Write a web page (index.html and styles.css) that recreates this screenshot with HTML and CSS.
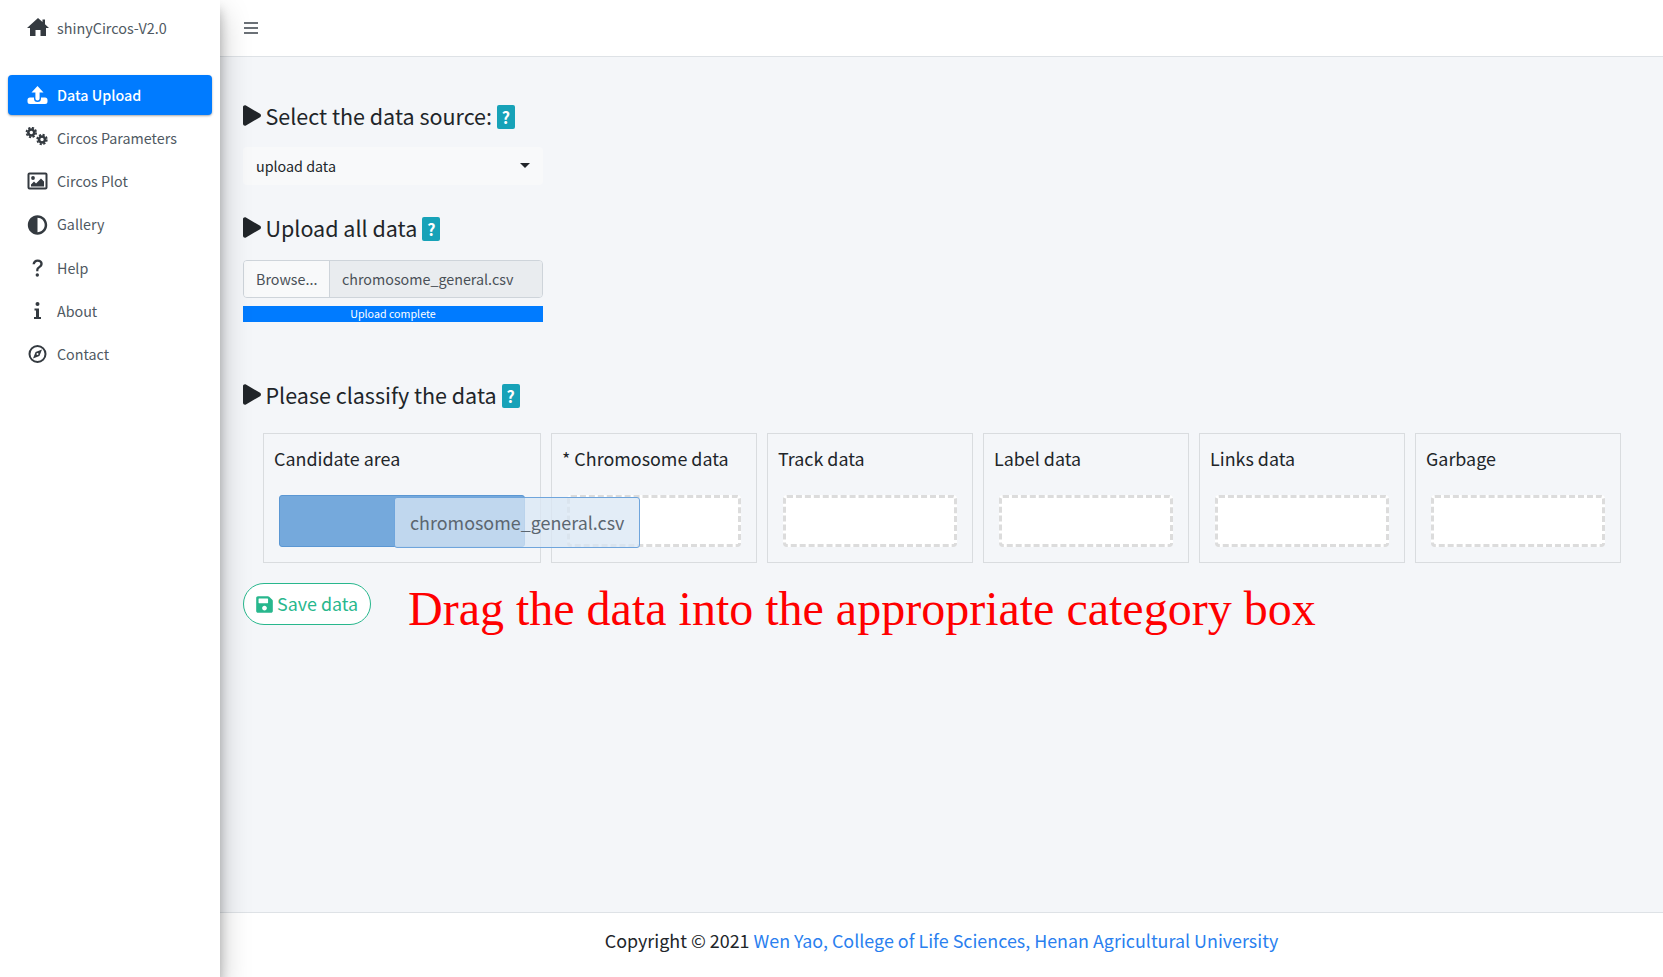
FILE: index.html
```html
<!DOCTYPE html>
<html lang="en">
<head>
    <meta charset="UTF-8">
    <meta name="viewport" content="width=device-width, initial-scale=1.0">
    <title>shinyCircos-V2.0</title>
    <link rel="stylesheet" href="styles.css">
</head>
<body>
    <aside class="sidebar">
        <div class="brand">
            <svg class="nav-icon brand-icon" viewBox="0 0 22 20"><path d="M11 1l4.500 4V2.500H18v4.700L22 11h-3v8h-5.500v-6h-5v6H3v-8H0z"/></svg>
            <span>shinyCircos-V2.0</span>
        </div>
        <nav class="nav">
            <a class="nav-item active">
                <svg class="nav-icon" viewBox="0 0 20 20"><path d="M10 1l6 6.500h-3.900v6a2.100 2.100 0 0 1-4.200 0v-6H4z"/><path d="M6.500 12.500v1a3.500 3.500 0 0 0 7 0v-1h4a2.500 2.500 0 0 1 2.500 2.500v1.500a2.500 2.500 0 0 1-2.500 2.500h-15A2.500 2.500 0 0 1 0 16.500V15a2.500 2.500 0 0 1 2.500-2.500z"/></svg>
                <span>Data Upload</span>
            </a>
            <a class="nav-item">
                <svg class="nav-icon cogs" viewBox="0 0 22 20">
                    <circle cx="5.800" cy="5.500" r="4.800" class="gear-teeth"/>
                    <circle cx="5.800" cy="5.500" r="3" class="gear-ring"/>
                    <circle cx="16.500" cy="12.500" r="4.800" class="gear-teeth"/>
                    <circle cx="16.500" cy="12.500" r="3" class="gear-ring"/>
                </svg>
                <span>Circos Parameters</span>
            </a>
            <a class="nav-item">
                <svg class="nav-icon" viewBox="0 0 20 20"><path fill-rule="evenodd" d="M2 1.500h16a2 2 0 0 1 2 2v13a2 2 0 0 1-2 2H2a2 2 0 0 1-2-2v-13a2 2 0 0 1 2-2zM2 3.500v13h16v-13z"/><circle cx="5.500" cy="7" r="1.900"/><path d="M3.500 15.500v-2l3-3 2 2 5-5 3 3v5z"/></svg>
                <span>Circos Plot</span>
            </a>
            <a class="nav-item">
                <svg class="nav-icon" viewBox="0 0 512 512"><path d="M8 256c0 136.966 111.033 248 248 248s248-111.034 248-248S392.966 8 256 8 8 119.033 8 256zm248 184V72c101.705 0 184 82.311 184 184 0 101.705-82.311 184-184 184z"/></svg>
                <span>Gallery</span>
            </a>
            <a class="nav-item">
                <svg class="nav-icon" viewBox="0 0 20 20"><path d="M5 6.200C5.300 3.300 7.300 1.500 10.200 1.500c3 0 5 1.800 5 4.300 0 2-1.100 3-2.500 4-1.300.9-1.800 1.500-1.800 2.700v.7H8.700v-1c0-1.800.8-2.800 2.200-3.800 1.200-.9 1.900-1.500 1.900-2.600 0-1.200-1-2-2.600-2-1.500 0-2.500.9-2.800 2.400z"/><circle cx="9.800" cy="17" r="1.700"/></svg>
                <span>Help</span>
            </a>
            <a class="nav-item">
                <svg class="nav-icon" viewBox="0 0 20 20"><circle cx="10" cy="3" r="2"/><path d="M7 7.500h4.500V16H13.500v2h-7v-2h2V9.500H7z"/></svg>
                <span>About</span>
            </a>
            <a class="nav-item">
                <svg class="nav-icon" viewBox="0 0 20 20"><path fill-rule="evenodd" d="M10 1a9 9 0 1 1 0 18a9 9 0 0 1 0-18zM10 3a7 7 0 1 0 0 14a7 7 0 0 0 0-14z"/><path fill-rule="evenodd" d="M14.500 5.500l-2.600 6.400-6.400 2.600 2.600-6.400zM10 9a1 1 0 1 0 0 2a1 1 0 0 0 0-2z"/></svg>
                <span>Contact</span>
            </a>
        </nav>
    </aside>

    <div class="wrapper">
        <header class="navbar">
            <svg class="bars" viewBox="0 0 14 12"><path d="M0 1h14M0 6h14M0 11h14"/></svg>
        </header>

        <main class="content">
            <h4 class="title first">
                <svg class="play" viewBox="0 0 448 512"><path d="M424.400 214.700L72.400 6.600C43.800-10.300 0 6.100 0 47.900V464c0 37.500 40.700 60.100 72.400 41.300l352-208c31.400-18.500 31.500-64.100 0-82.600z"/></svg>
                <span>Select the data source:</span>
                <span class="help-badge">?</span>
            </h4>
            <div class="select">
                <span class="select-text">upload data</span>
                <span class="caret"></span>
            </div>

            <h4 class="title upload-title">
                <svg class="play" viewBox="0 0 448 512"><path d="M424.400 214.700L72.400 6.600C43.800-10.300 0 6.100 0 47.900V464c0 37.500 40.700 60.100 72.400 41.300l352-208c31.400-18.500 31.500-64.100 0-82.600z"/></svg>
                <span>Upload all data</span>
                <span class="help-badge">?</span>
            </h4>
            <div class="file-input">
                <span class="browse">Browse...</span>
                <span class="file-name">chromosome_general.csv</span>
            </div>
            <div class="progress">Upload complete</div>

            <h4 class="title classify-title">
                <svg class="play" viewBox="0 0 448 512"><path d="M424.400 214.700L72.400 6.600C43.800-10.300 0 6.100 0 47.900V464c0 37.500 40.700 60.100 72.400 41.300l352-208c31.400-18.500 31.500-64.100 0-82.600z"/></svg>
                <span>Please classify the data</span>
                <span class="help-badge">?</span>
            </h4>

            <div class="buckets">
                <div class="bucket candidate">
                    <div class="bucket-title">Candidate area</div>
                    <div class="rank-item"></div>
                    <div class="drag-ghost">chromosome_general.csv</div>
                </div>
                <div class="bucket">
                    <div class="bucket-title">* Chromosome data</div>
                    <div class="drop-zone"></div>
                </div>
                <div class="bucket">
                    <div class="bucket-title">Track data</div>
                    <div class="drop-zone"></div>
                </div>
                <div class="bucket">
                    <div class="bucket-title">Label data</div>
                    <div class="drop-zone"></div>
                </div>
                <div class="bucket">
                    <div class="bucket-title">Links data</div>
                    <div class="drop-zone"></div>
                </div>
                <div class="bucket">
                    <div class="bucket-title">Garbage</div>
                    <div class="drop-zone"></div>
                </div>
            </div>

            <div class="save-row">
                <button class="save-btn" type="button">
                    <svg class="save-icon" viewBox="0 0 448 512"><path d="M433.941 129.941l-83.882-83.882A48 48 0 0 0 316.118 32H48C21.490 32 0 53.490 0 80v352c0 26.510 21.490 48 48 48h352c26.510 0 48-21.490 48-48V163.882a48 48 0 0 0-14.059-33.941zM224 416c-35.346 0-64-28.654-64-64 0-35.346 28.654-64 64-64s64 28.654 64 64c0 35.346-28.654 64-64 64zm96-304.520V212c0 6.627-5.373 12-12 12H76c-6.627 0-12-5.373-12-12V108c0-6.627 5.373-12 12-12h228.520c3.183 0 6.235 1.264 8.485 3.515l3.480 3.480A11.996 11.996 0 0 1 320 111.480z"/></svg>
                    <span class="save-text">Save data</span>
                </button>
                <span class="drag-note">Drag the data into the appropriate category box</span>
            </div>
        </main>

        <footer class="footer">
            <span>Copyright © 2021&nbsp;<a>Wen Yao, College of Life Sciences, Henan Agricultural University</a></span>
        </footer>
    </div>
</body>
</html>
```

FILE: styles.css
```css
html, body {
    height: 100%;
}
body {
    margin: 0;
    display: flex;
    min-height: 977px;
    font-family: "Noto Sans CJK SC", "Noto Sans", sans-serif;
    font-size: 14.300px;
    color: #212529;
    background-color: #f4f6f9;
    overflow: hidden;
}

/* sidebar */
.sidebar {
    width: 220px;
    flex-shrink: 0;
    background: white;
    box-shadow: 0 14px 28px rgba(0, 0, 0, 0.25), 0 10px 10px rgba(0, 0, 0, 0.22);
    position: relative;
    z-index: 2;
    color: #4f5962;
}
.brand {
    display: flex;
    align-items: center;
    height: 57px;
    padding-left: 27px;
    box-sizing: border-box;
    line-height: 1;
}
.brand span {
    margin-left: 8px;
    font-size: 14.400px;
}
.nav {
    display: flex;
    flex-direction: column;
    margin-top: 18px;
    padding: 0 8px;
    gap: 3.200px;
}
.nav-item {
    display: flex;
    align-items: center;
    height: 40px;
    padding-left: 19px;
    border-radius: 4px;
    line-height: 1;
    font-size: 14.300px;
}
.nav-item span {
    margin-left: 9px;
}
.nav-item.active {
    background-color: #007bff;
    color: white;
    font-weight: 500;
    box-shadow: 0 1px 3px rgba(0, 0, 0, 0.12), 0 1px 2px rgba(0, 0, 0, 0.24);
}
.nav-icon {
    width: 21px;
    height: 20px;
    fill: #343a40;
    flex-shrink: 0;
}
.active .nav-icon {
    fill: white;
}
.brand-icon {
    width: 22px;
    height: 20px;
    margin-bottom: 4px;
}
.cogs {
    width: 23px;
    margin-left: -2px;
    margin-top: -3px;
}
.gear-teeth {
    fill: none;
    stroke: #343a40;
    stroke-width: 1.800;
    stroke-dasharray: 2.200 1.570;
}
.gear-ring {
    fill: none;
    stroke: #343a40;
    stroke-width: 2.600;
}

/* main column */
.wrapper {
    flex: 1;
    display: flex;
    flex-direction: column;
    min-width: 0;
}
.navbar {
    height: 56px;
    display: flex;
    align-items: center;
    padding-left: 24px;
    background: white;
    border-bottom: 1px solid #dee2e6;
}
.bars {
    width: 14px;
    height: 12px;
    stroke: #6b7177;
    stroke-width: 2;
}
.content {
    flex: 1;
    padding: 0 23px;
    position: relative;
}

.title {
    display: flex;
    align-items: center;
    margin: 0;
    font-size: 21.500px;
    font-weight: 400;
    line-height: 29px;
    color: #212529;
}
.title.first {
    margin-top: 44px;
}
.upload-title {
    margin-top: 28px;
}
.classify-title {
    margin-top: 58px;
}
.play {
    width: 18px;
    height: 21px;
    margin-right: 4.500px;
    fill: #212529;
    flex-shrink: 0;
}
.help-badge {
    display: inline-flex;
    align-items: center;
    justify-content: center;
    width: 18px;
    height: 24px;
    margin-left: 5px;
    margin-top: 3px;
    border-radius: 2px;
    background-color: #17a2b8;
    color: white;
    font-size: 16px;
    font-weight: 700;
    line-height: 1;
}

.select {
    width: 300px;
    height: 38px;
    box-sizing: border-box;
    margin-top: 17px;
    padding: 0 13px;
    display: flex;
    align-items: center;
    justify-content: space-between;
    background-color: #f8f9fa;
    border-radius: 4px;
    font-size: 14.300px;
}
.select-text {
    margin-bottom: 2px;
}
.caret {
    width: 0;
    height: 0;
    margin-top: -2px;
    border-left: 5px solid transparent;
    border-right: 5px solid transparent;
    border-top: 5px solid #212529;
}

.file-input {
    display: flex;
    width: 300px;
    height: 38px;
    box-sizing: border-box;
    margin-top: 18px;
    border: 1px solid #ced4da;
    border-radius: 4px;
    overflow: hidden;
    color: #495057;
    line-height: 36px;
    font-size: 14.300px;
}
.browse {
    width: 86px;
    padding-left: 12px;
    box-sizing: border-box;
    background-color: #f8f9fa;
    border-right: 1px solid #ced4da;
}
.file-name {
    flex: 1;
    padding-left: 12px;
    background-color: #e9ecef;
}
.progress {
    width: 300px;
    height: 16px;
    margin-top: 8px;
    background-color: #007bff;
    color: white;
    font-size: 10.700px;
    line-height: 16px;
    text-align: center;
}

/* classify boxes */
.buckets {
    display: flex;
    gap: 10px;
    margin-top: 24px;
    margin-left: 20px;
    position: relative;
}
.bucket {
    width: 206px;
    height: 130px;
    box-sizing: border-box;
    padding: 0 15px;
    border: 1px solid #d9dcdf;
    position: relative;
}
.bucket.candidate {
    width: 278px;
}
.bucket-title {
    margin: 12px 0 0 -5px;
    font-size: 17.900px;
    line-height: 24px;
    color: #212529;
    white-space: nowrap;
}
.drop-zone {
    height: 52px;
    box-sizing: border-box;
    margin-top: 25px;
    background: white;
    border: 3px dashed #dcdcdc;
    border-radius: 4px;
}
.rank-item {
    width: 246px;
    height: 52px;
    box-sizing: border-box;
    margin-top: 25px;
    background-color: #75a9dc;
    border: 1px solid #5b97d3;
    border-radius: 3px;
}
.drag-ghost {
    position: absolute;
    left: 130px;
    top: 63px;
    z-index: 1;
    width: 246px;
    height: 51px;
    box-sizing: border-box;
    padding-left: 15px;
    background-color: rgba(218, 231, 244, 0.75);
    border: 1px solid #6fa5dc;
    border-radius: 3px;
    color: #5b6670;
    font-size: 17.900px;
    line-height: 48px;
    white-space: nowrap;
}

.save-row {
    display: flex;
    align-items: flex-start;
    margin-top: 20px;
}
.save-btn {
    display: flex;
    align-items: center;
    flex-shrink: 0;
    width: 128px;
    height: 42px;
    box-sizing: border-box;
    padding: 0 0 0 12px;
    background: white;
    border: 1px solid #28b78d;
    border-radius: 21px;
    color: #28b78d;
    font-family: inherit;
    font-size: 17.900px;
}
.save-text {
    margin-bottom: 2px;
}
.save-icon {
    width: 17px;
    height: 19px;
    margin-right: 4px;
    fill: #28b78d;
}
.drag-note {
    margin-left: 37px;
    margin-top: -2px;
    font-family: "Liberation Serif", serif;
    font-size: 48px;
    line-height: 56px;
    color: red;
    white-space: nowrap;
}

.footer {
    height: 64px;
    display: flex;
    align-items: center;
    justify-content: center;
    background: white;
    border-top: 1px solid #dee2e6;
    font-size: 17.900px;
    color: #212529;
}
.footer span {
    margin-bottom: 10px;
}
.footer a {
    color: #2a7fef;
}
```
